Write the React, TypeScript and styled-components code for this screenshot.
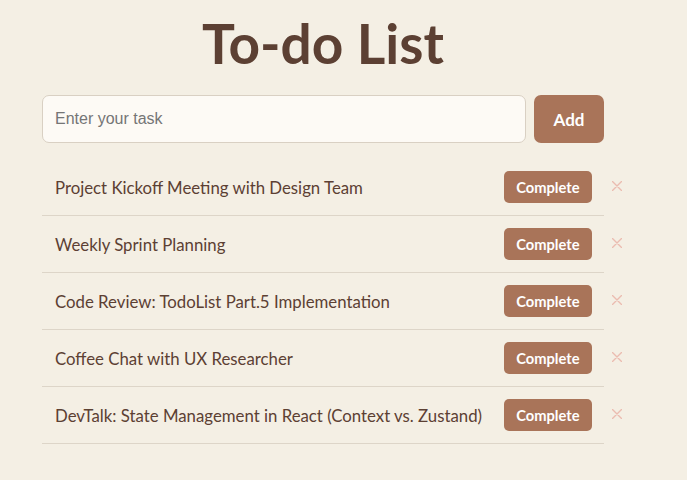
import React, { useState } from "react";
import styled, { createGlobalStyle } from "styled-components";

const GlobalStyle = createGlobalStyle`
  html, body { margin: 0; padding: 0; background: #f4efe4; }
  * { box-sizing: border-box; }
`;

const Page = styled.div`
  min-height: 480px;
  padding: 10px 0 0 42px;
  font-family: "Lato", "Noto Sans", sans-serif;
`;

const Container = styled.div`
  width: 562px;
  display: flex;
  flex-direction: column;
`;

const Title = styled.h1`
  margin: 0 0 19px;
  font-size: 55px;
  line-height: 66px;
  font-weight: 700;
  color: #5c4033;
  text-align: center;
`;

const Form = styled.form`
  display: flex;
  gap: 8px;
  margin-bottom: 16px;
`;

const Input = styled.input`
  flex: 1;
  height: 48px;
  padding: 0 12px;
  border: 1px solid #d9d0c3;
  border-radius: 7px;
  background: #fdfaf5;
  font-family: "Liberation Sans", Arial, sans-serif;
  font-size: 16px;
  color: #5c4033;
  outline: none;
  &::placeholder { color: #757575; }
`;

const AddButton = styled.button`
  width: 70px;
  height: 48px;
  border: none;
  border-radius: 7px;
  background: #a97459;
  color: #ffffff;
  font-family: "Lato", sans-serif;
  font-weight: 700;
  font-size: 17px;
  cursor: pointer;
`;

const List = styled.ul`
  list-style: none;
  margin: 0;
  padding: 0;
`;

const Item = styled.li`
  display: flex;
  align-items: center;
  height: 57px;
  padding: 1px 12px 0 13px;
  border-bottom: 1px solid #ddd5c8;
`;

const ItemText = styled.span`
  flex: 1;
  font-size: 16.8px;
  color: #5c4033;
  white-space: nowrap;
`;

const CompleteButton = styled.button`
  height: 32px;
  margin-top: -1px;
  padding: 0 12.5px;
  border: none;
  border-radius: 5px;
  background: #a97459;
  color: #ffffff;
  font-family: "Lato", sans-serif;
  font-weight: 700;
  font-size: 14.7px;
  cursor: pointer;
`;

const DeleteButton = styled.button`
  width: 10px;
  height: 10px;
  margin: -3px -30px 0 20px;
  padding: 0;
  border: none;
  background: none;
  display: flex;
  cursor: pointer;
`;

const tasks = [
  "Project Kickoff Meeting with Design Team",
  "Weekly Sprint Planning",
  "Code Review: TodoList Part.5 Implementation",
  "Coffee Chat with UX Researcher",
  "DevTalk: State Management in React (Context vs. Zustand)",
];

export default function App() {
  const [value, setValue] = useState("");
  return (
    <>
      <GlobalStyle />
      <Page>
        <Container>
          <Title>To-do List</Title>
          <Form onSubmit={(e) => e.preventDefault()}>
            <Input
              placeholder="Enter your task"
              value={value}
              onChange={(e) => setValue(e.target.value)}
            />
            <AddButton type="submit">Add</AddButton>
          </Form>
          <List>
            {tasks.map((t) => (
              <Item key={t}>
                <ItemText>{t}</ItemText>
                <CompleteButton>Complete</CompleteButton>
                <DeleteButton aria-label="delete">
                  <svg width="10" height="10" viewBox="0 0 10 10">
                    <path d="M0.5 0.5L9.5 9.5M9.5 0.5L0.5 9.5" stroke="#ebbcb0" strokeWidth="1.4" strokeLinecap="round" />
                  </svg>
                </DeleteButton>
              </Item>
            ))}
          </List>
        </Container>
      </Page>
    </>
  );
}
